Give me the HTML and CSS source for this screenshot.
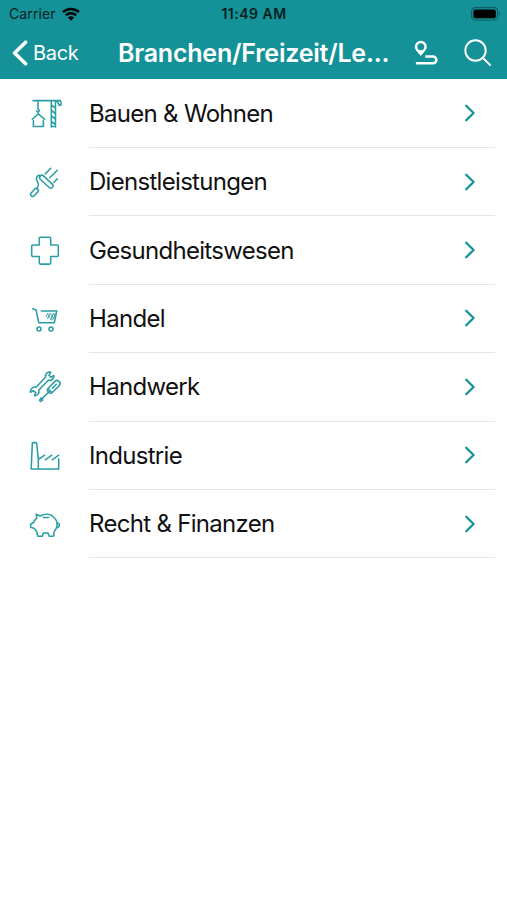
FILE: index.html
```html
<!DOCTYPE html>
<html lang="de">
<head>
    <meta charset="UTF-8">
    <meta name="viewport" content="width=device-width, initial-scale=1.0">
    <title>Branchen/Freizeit/Leben</title>
    <link rel="stylesheet" href="styles.css">
</head>
<body>
    <!-- Header -->
    <header>
        <div class="status-bar">
            <div class="carrier">
                <span>Carrier</span>
                <svg class="wifi" width="18" height="14" viewBox="0 0 18 14">
                    <path d="M1 5.2a11.700 11.700 0 0 1 16 0M3.800 8.300a7.600 7.600 0 0 1 10.400 0"/>
                    <path class="solid" d="M5.900 10.600a4.600 4.600 0 0 1 6.200 0L9 13.800z"/>
                </svg>
            </div>
            <div class="time">11:49 AM</div>
            <svg class="battery" width="30" height="14" viewBox="0 0 30 14">
                <rect class="case" x="0.6" y="0.6" width="26" height="12.4" rx="3.6"/>
                <rect x="2.4" y="2.4" width="22.4" height="8.8" rx="2"/>
                <path class="cap" d="M28 4.800q2 2 0 4z"/>
            </svg>
        </div>
        <nav class="nav-bar">
            <a class="back" href="#">
                <svg width="16" height="26" viewBox="0 0 16 26"><path d="M13.600 2.200 2.600 13l11 10.800"/></svg>
                <span>Back</span>
            </a>
            <h1>Branchen/Freizeit/Le...</h1>
            <a class="route" href="#" aria-label="Route">
                <svg width="24" height="26" viewBox="0 0 24 26">
                    <path class="solid" fill-rule="evenodd" d="M6.800.800a6 6 0 0 1 6 6c0 3.200-3.600 6.200-6 9.200-2.400-3-6-6-6-9.200a6 6 0 0 1 6-6zm0 2.400a3.500 3.500 0 1 0 0 7 3.500 3.500 0 0 0 0-7z"/>
                    <path d="M12.300 16.600h6.700a3.300 3.300 0 0 1 0 6.700H3"/>
                </svg>
            </a>
            <a class="search" href="#" aria-label="Suche">
                <svg width="28" height="28" viewBox="0 0 28 28"><circle cx="11.500" cy="11.500" r="10.200"/><path d="m18.800 18.800 7.400 7.300"/></svg>
            </a>
        </nav>
    </header>

    <!-- Category list -->
    <main>
        <ul class="list">
            <li>
                <svg class="icon" viewBox="0 0 36 36">
                    <path d="M6 4.600h27.300M24.300 4.600V31M28.500 4.600V31M24.300 9l4.200 3M24.300 14.500l4.200 3M24.300 20l4.200 3M24.300 25.500l4.200 3M24.300 30.500h4.200M30 5l2.500 4.500 1.500-.500V6l-1-1.400"/>
                    <path d="M11 4.600V11M11 11v2.300a1.300 1.300 0 1 1-1.400 1.400M11.200 15.800v2M5.300 23.300l6-5.500 6.400 5.500M6.400 24.500v6h10v-6"/>
                </svg>
                <a href="#">Bauen &amp; Wohnen <svg class="chevron" viewBox="0 0 12 18"><path d="m2.200 1.800 7.400 7.200-7.400 7.200"/></svg></a>
            </li>
            <li>
                <svg class="icon" viewBox="0 0 36 36">
                    <rect x="11" y="15.400" width="16.600" height="4.600" rx="2.200" transform="rotate(43 19.300 17.700)"/>
                    <rect x="2.900" y="26.300" width="9.200" height="4.200" rx="2" transform="rotate(-48 7.500 28.400)"/>
                    <path d="M13.500 11.700c-2.500-1-4.200.800-4 3.300.200 2.800 2.600 4.400 1.800 6.500L9.700 25M23.700 4.200l-5.400 5.700M30.300 6.200l-7.600 7.600M30.300 14.900l-3.600 3.600"/>
                </svg>
                <a href="#">Dienstleistungen <svg class="chevron" viewBox="0 0 12 18"><path d="m2.200 1.800 7.400 7.200-7.400 7.200"/></svg></a>
            </li>
            <li>
                <svg class="icon" viewBox="0 0 36 36">
                    <path d="M13.300 4.300h9.400q1 0 1 1v6.600h6.600q1 0 1 1v9.600q0 1-1 1h-6.600v6.600q0 1-1 1h-9.400q-1 0-1-1v-6.600H5.700q-1 0-1-1v-9.600q0-1 1-1h6.600V5.300q0-1 1-1z"/>
                </svg>
                <a href="#">Gesundheitswesen <svg class="chevron" viewBox="0 0 12 18"><path d="m2.200 1.800 7.400 7.200-7.400 7.200"/></svg></a>
            </li>
            <li>
                <svg class="icon" viewBox="0 0 36 36">
                    <path d="m5.700 7.800 3.400 1.200 2.600 12.700h15.600L29.800 10H14.300"/>
                    <path class="thin" d="m19 15.500 1.800-3.300M20.500 17.500l3-5.300M22 13v4M23.500 18.500l3-6M25 13v6M26.500 18l1.500-5.500"/>
                    <circle cx="12" cy="27.900" r="2"/><circle cx="24" cy="27.900" r="2"/>
                </svg>
                <a href="#">Handel <svg class="chevron" viewBox="0 0 12 18"><path d="m2.200 1.800 7.400 7.200-7.400 7.200"/></svg></a>
            </li>
            <li>
                <svg class="icon" viewBox="0 0 36 36">
                    <path d="M23.800 3.200c-3-.700-5.700 1.400-5.300 5L9 18.200c-3.200-.600-6 1.700-5.500 5l2.900-1.500 2.300 2-1.200 3c3.200 0 5-2.400 4.300-5.600l9.500-9.900c3.200.700 6-1.400 5.500-4.700l-2.900 1.800-2-2z"/>
                    <rect x="19.300" y="14.800" width="15" height="6" rx="2.800" transform="rotate(-45 26.800 17.800)"/>
                    <path d="m21.700 20.200 3 3M22.300 22.500l-7.800 7.600M15 29.500l-1.200-.500-1.200 2.600 1.200.900 2-1.500zM25.500 19.100l3.600-3.600"/>
                </svg>
                <a href="#">Handwerk <svg class="chevron" viewBox="0 0 12 18"><path d="m2.200 1.800 7.400 7.200-7.400 7.200"/></svg></a>
            </li>
            <li>
                <svg class="icon" viewBox="0 0 36 36">
                    <path d="M4.200 31 5.300 5.600q0-1 1-1h2.400q1 0 1 1L11.300 21v10M4.200 31h27.500V20.800M11.300 21.500l6.400-4.300M18.300 21.800l6.400-4.600M25.300 21.800l6.400-4.600"/>
                </svg>
                <a href="#">Industrie <svg class="chevron" viewBox="0 0 12 18"><path d="m2.200 1.800 7.400 7.200-7.400 7.200"/></svg></a>
            </li>
            <li>
                <svg class="icon" viewBox="0 0 36 36">
                    <path d="M9.300 8.200 13 10c5-2.500 10.500-2.200 13.500 1 4.800 4 4.600 10.500.700 14.500l-.600 4.700h-4.400L21 27h-4.700l-1 3.200h-4.600l-1-4.700L7 22.300l-2.600-.800q-.700-.200-.700-1V18l3-1.500c.5-1.500 1.500-3 3-4.300zM16.300 11.400h5.400M30 17.500c3-.800 3 2.300 1.200 4"/>
                </svg>
                <a href="#">Recht &amp; Finanzen <svg class="chevron" viewBox="0 0 12 18"><path d="m2.200 1.800 7.400 7.200-7.400 7.200"/></svg></a>
            </li>
        </ul>
    </main>
</body>
</html>
```
FILE: styles.css
```css
:root {
    --primary: #149298;
    --line: #e6e6e7;
    --text: #111;
}

* {
    margin: 0;
    padding: 0;
    box-sizing: border-box;
}

body {
    background-color: #fff;
    color: var(--text);
    font-family: Inter, "Liberation Sans", sans-serif;
}

a {
    color: inherit;
    text-decoration: none;
}

svg {
    display: block;
    flex: none;
    fill: none;
    stroke-linecap: round;
    stroke-linejoin: round;
}

header {
    height: 79px;
    background-color: var(--primary);
}

.status-bar {
    display: grid;
    grid-template-columns: 1fr auto 1fr;
    align-items: center;
    height: 27px;
    padding: 0 6px 0 9px;
    color: #061f20;
    font-size: 14px;
}

.carrier {
    display: flex;
    align-items: center;
    gap: 6px;
    letter-spacing: 0.1px;
}

.wifi {
    stroke: #000;
    stroke-width: 2.5;
    stroke-linecap: butt;
}

.wifi .solid {
    fill: #000;
    stroke: none;
}

.time {
    margin-right: 2px;
    font-weight: 600;
    letter-spacing: 0.5px;
}

.battery {
    justify-self: end;
    fill: #000;
}

.battery .case {
    fill: none;
    stroke: #0d5f63;
    stroke-width: 1.2;
}

.battery .cap {
    fill: #0d5f63;
}

.nav-bar {
    display: flex;
    align-items: center;
    height: 52px;
    padding: 0 15px 0 12px;
    color: #fff;
}

.back {
    display: flex;
    align-items: center;
    gap: 5px;
    width: 106px;
    font-size: 20px;
    letter-spacing: -0.3px;
}

.back svg {
    stroke: #fff;
    stroke-width: 3.6;
}

h1 {
    width: 296px;
    font-size: 25px;
    font-weight: 600;
    letter-spacing: -0.22px;
    white-space: nowrap;
}

.route svg {
    stroke: #fff;
    stroke-width: 2.5;
}

.route .solid {
    fill: #fff;
    stroke: none;
}

.search {
    margin-left: auto;
}

.search svg {
    stroke: #fff;
    stroke-width: 1.9;
}

.list {
    list-style: none;
    padding: 0.6px 12px 0 27px;
}

.list li {
    display: flex;
    align-items: center;
    gap: 26px;
    height: 68.4px;
}

.icon {
    width: 36px;
    height: 36px;
    stroke: #2b9ea3;
    stroke-width: 1.55;
}

.icon .thin {
    stroke-width: 1;
}

.list a {
    display: flex;
    flex: 1;
    align-items: center;
    justify-content: space-between;
    height: 100%;
    padding-right: 19px;
    border-bottom: 1px solid var(--line);
    font-size: 24px;
    letter-spacing: -0.7px;
}

.chevron {
    width: 12px;
    height: 18px;
    stroke: var(--primary);
    stroke-width: 2.3;
}
```
